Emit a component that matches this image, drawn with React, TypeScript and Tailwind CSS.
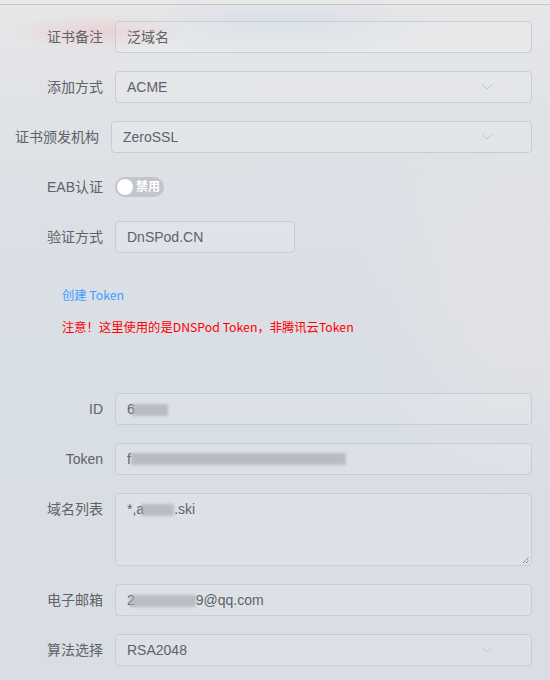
import type { ReactNode } from "react";

const font = "font-['Liberation_Sans','Noto_Sans_CJK_SC',sans-serif]";

function Chevron() {
	return (
		<svg width="12" height="8" viewBox="0 0 12 8" className="shrink-0">
			<polyline points="1,1.5 6,6 11,1.5" fill="none" stroke="#c0c4cc" strokeWidth="1" />
		</svg>
	);
}

function Blur({ w }: { w: number }) {
	return (
		<span
			className="inline-block h-[12px] rounded-[1px] bg-[#a9adb4]/70 blur-[1.5px] align-middle"
			style={{ width: w }}
		/>
	);
}

type RowProps = {
	label: string;
	labelWidth?: string;
	top?: boolean;
	children: ReactNode;
};

function Row({ label, labelWidth = "w-[100px]", top, children }: RowProps) {
	return (
		<div className={`flex ${top ? "items-start" : "items-center"}`}>
			<label className={`${labelWidth} shrink-0 pr-3 text-right text-[14px] leading-[32px] text-[#606266]`}>
				{label}
			</label>
			<div className="flex-1">{children}</div>
		</div>
	);
}

function Input({ children, select, className = "" }: { children: ReactNode; select?: boolean; className?: string }) {
	return (
		<div
			className={`flex h-[32px] items-center justify-between rounded-[4px] border border-[#c9ccd3] bg-white/10 pl-[11px] pr-[38px] text-[14px] text-[#606266] ${className}`}
		>
			<div className="flex items-center">{children}</div>
			{select && <Chevron />}
		</div>
	);
}

export default function App() {
	return (
		<div
			className={`${font} relative h-[680px] w-[550px] overflow-hidden bg-[radial-gradient(ellipse_90px_18px_at_100px_32px,rgba(234,208,210,0.95),transparent),radial-gradient(ellipse_170px_28px_at_280px_26px,rgba(214,222,232,0.9),transparent),radial-gradient(ellipse_160px_200px_at_520px_300px,rgba(228,227,230,0.9),transparent),linear-gradient(180deg,#e7e7e8_0%,#dfe2e7_18%,#d8dee5_55%,#d9dee4_100%)]`}
		>
			<div className="h-[4px] border-b border-[#c5c5c5] bg-[#e8e8e8] box-content" />
			<div className="flex flex-col gap-[18px] pl-[15px] pr-[18px] pt-[16px]">
				<Row label="证书备注">
					<Input>泛域名</Input>
				</Row>
				<Row label="添加方式">
					<Input select>ACME</Input>
				</Row>
				<Row label="证书颁发机构" labelWidth="w-[96px]">
					<Input select>ZeroSSL</Input>
				</Row>
				<Row label="EAB认证">
					<div className="flex h-[32px] items-center">
						<div className="flex h-[20px] w-[49px] items-center rounded-full bg-[#c2c5cc] pl-[2px]">
							<span className="h-[16px] w-[16px] rounded-full bg-white" />
							<span className="ml-[3px] text-[12px] font-bold text-white">禁用</span>
						</div>
					</div>
				</Row>
				<Row label="验证方式">
					<Input className="w-[180px]">DnSPod.CN</Input>
				</Row>
			</div>

			<div className="pl-[62px] pt-[26px] font-['Noto_Sans_CJK_SC',sans-serif] text-[12.3px] leading-[32px]">
				<p className="text-[#409eff]">创建 Token</p>
				<p className="text-[#f00]">注意！这里使用的是DNSPod Token，非腾讯云Token</p>
			</div>

			<div className="flex flex-col gap-[18px] pl-[15px] pr-[18px] pt-[50px]">
				<Row label="ID">
					<Input>
						<span>6</span>
						<span className="-ml-[3px]">
							<Blur w={36} />
						</span>
					</Input>
				</Row>
				<Row label="Token">
					<Input>
						<span>f</span>
						<Blur w={215} />
					</Input>
				</Row>
				<Row label="域名列表" top>
					<div className="relative h-[73px] rounded-[4px] border border-[#c9ccd3] bg-white/10 px-[11px] pt-[5px] text-[14px] leading-[21px] text-[#606266]">
						<span>*,a</span>
						<span className="-ml-[3px]">
							<Blur w={33} />
						</span>
						<span>.ski</span>
						<svg width="8" height="8" viewBox="0 0 8 8" className="absolute bottom-[1px] right-[1px]">
							<line x1="1" y1="7" x2="7" y2="1" stroke="#555" strokeWidth="1" strokeDasharray="1 1" />
							<line x1="4" y1="7" x2="7" y2="4" stroke="#555" strokeWidth="1" strokeDasharray="1 1" />
						</svg>
					</div>
				</Row>
				<Row label="电子邮箱">
					<Input>
						<span>2</span>
						<span className="-ml-[5px]">
							<Blur w={66} />
						</span>
						<span>9@qq.com</span>
					</Input>
				</Row>
				<Row label="算法选择">
					<Input select>RSA2048</Input>
				</Row>
			</div>
		</div>
	);
}
